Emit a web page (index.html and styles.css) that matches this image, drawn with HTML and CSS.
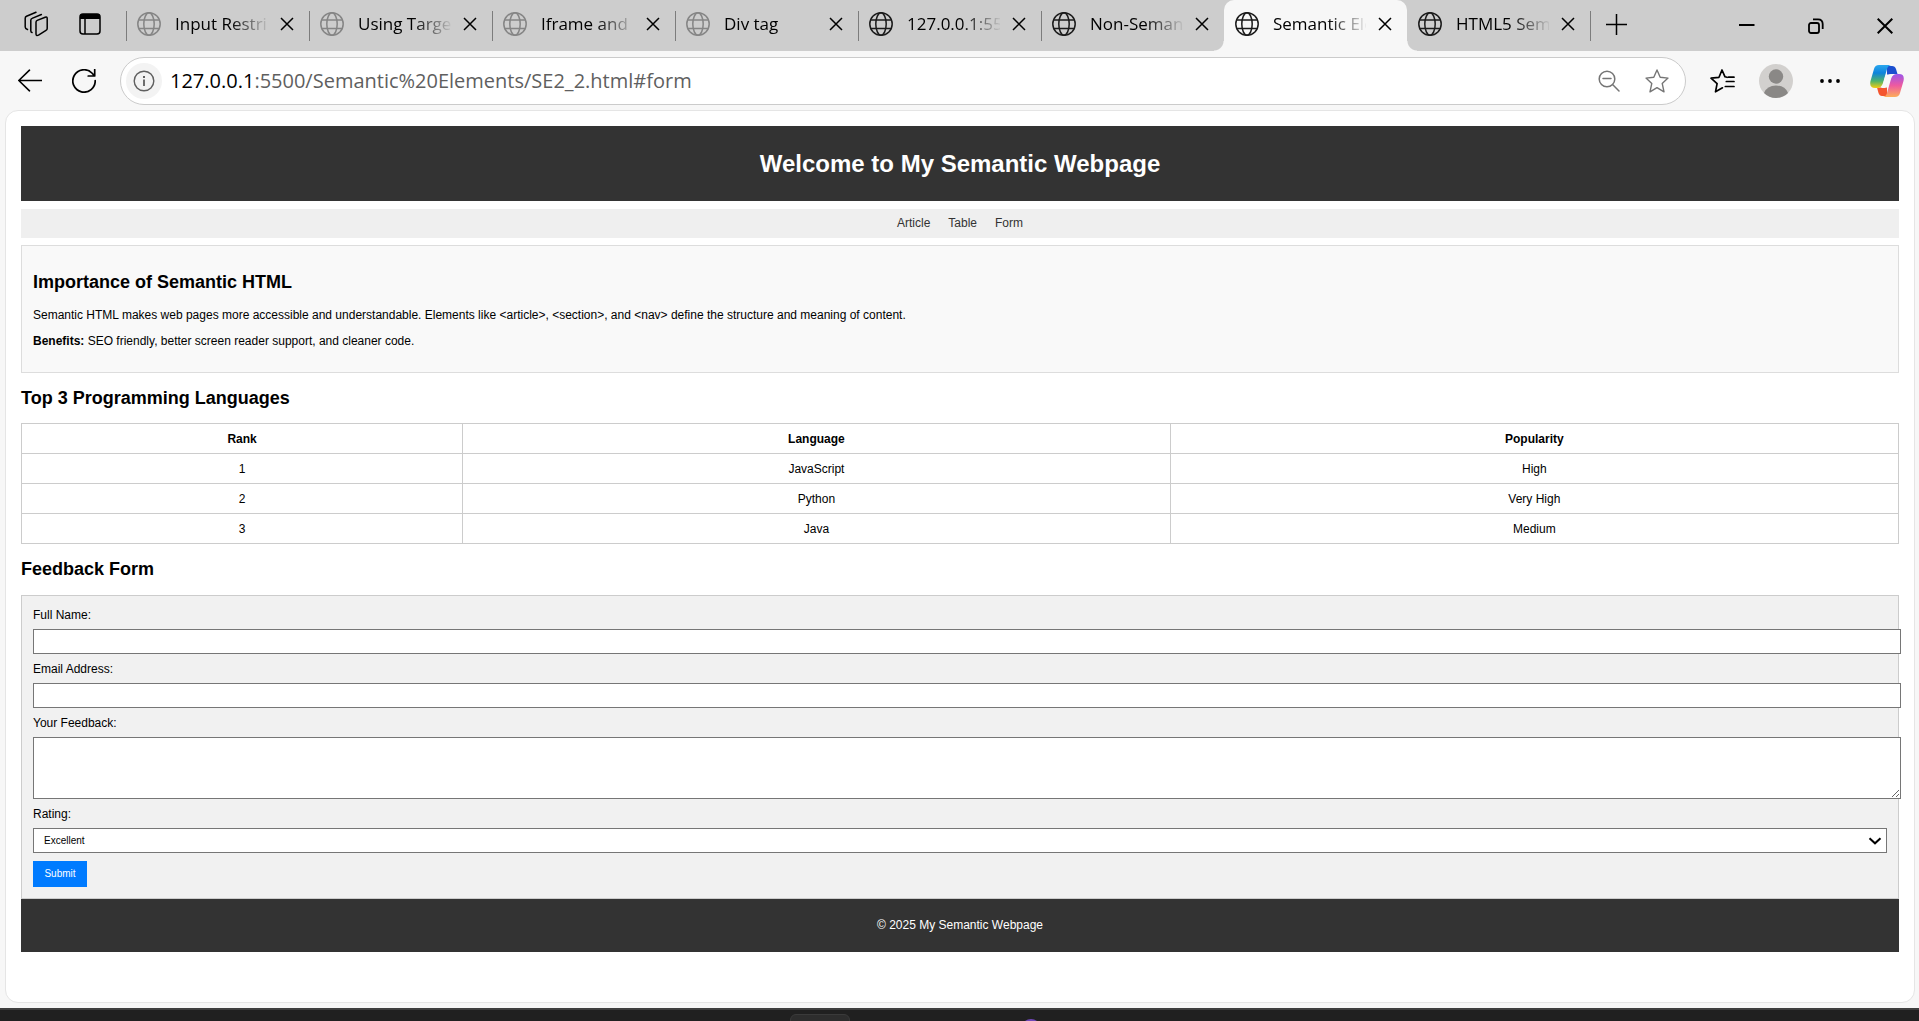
FILE: index.html
```html
<!DOCTYPE html>
<html lang="en">
<head>
<meta charset="utf-8">
<meta name="viewport" content="width=device-width, initial-scale=1">
<title>Semantic Elements</title>
<link rel="stylesheet" href="styles.css">
</head>
<body>
<svg class="sprite" width="0" height="0" aria-hidden="true">
  <symbol id="globe" viewBox="0 0 24 24"><g fill="none" stroke="currentColor" stroke-width="1.5"><circle cx="12" cy="12" r="11.2"/><ellipse cx="12" cy="12" rx="5.2" ry="11.2"/><path d="M1.6 8h20.8M1.6 16.5h20.8"/></g></symbol>
  <symbol id="cross" viewBox="0 0 14 14"><path d="M1 1l12 12M13 1L1 13" fill="none" stroke="currentColor" stroke-width="1.5"/></symbol>
</svg>

<div class="tabstrip">
  <button class="strip-btn" aria-label="Workspaces"><svg width="26" height="26" viewBox="0 0 26 26" fill="none" stroke="currentColor" stroke-width="1.5" stroke-linejoin="round" stroke-linecap="round"><path d="M13 11.2q0-1.3 1.2-1.8l8-3.2q2-.7 2 1.3v10q0 1.300-1.200 1.900l-7.500 4.700q-2.500 1.200-2.500-1.300z"/><path d="M9 21.500q-1.200-.3-1.200-1.800v-10.400q0-1.400 1.300-1.900l9.300-3.900"/><path d="M4.500 18.500q-2.300-.8-2.300-2.500v-8.800q0-1.300 1.300-1.900l9.500-4"/></svg></button>
  <button class="strip-btn" aria-label="Tab actions"><svg width="22" height="22" viewBox="0 0 22 22"><rect x="1" y="1" width="20" height="20" rx="3" fill="none" stroke="currentColor" stroke-width="1.500"/><path d="M1 6V3q0-2 2-2h16q2 0 2 2v3z" fill="currentColor"/><path d="M6 6v15" stroke="currentColor" stroke-width="1.500"/></svg></button>
  <div class="tabs">
    <div class="tab idle"><svg class="globe"><use href="#globe"/></svg><span class="tab-title">Input Restrictions</span><button class="tab-close" aria-label="Close tab"><svg><use href="#cross"/></svg></button></div>
    <div class="tab idle"><svg class="globe"><use href="#globe"/></svg><span class="tab-title">Using Target</span><button class="tab-close" aria-label="Close tab"><svg><use href="#cross"/></svg></button></div>
    <div class="tab idle"><svg class="globe"><use href="#globe"/></svg><span class="tab-title">Iframe and</span><button class="tab-close" aria-label="Close tab"><svg><use href="#cross"/></svg></button></div>
    <div class="tab idle"><svg class="globe"><use href="#globe"/></svg><span class="tab-title">Div tag</span><button class="tab-close" aria-label="Close tab"><svg><use href="#cross"/></svg></button></div>
    <div class="tab"><svg class="globe"><use href="#globe"/></svg><span class="tab-title">127.0.0.1:5500</span><button class="tab-close" aria-label="Close tab"><svg><use href="#cross"/></svg></button></div>
    <div class="tab"><svg class="globe"><use href="#globe"/></svg><span class="tab-title">Non-Semantic</span><button class="tab-close" aria-label="Close tab"><svg><use href="#cross"/></svg></button></div>
    <div class="tab active"><svg class="globe"><use href="#globe"/></svg><span class="tab-title">Semantic Elements</span><button class="tab-close" aria-label="Close tab"><svg><use href="#cross"/></svg></button></div>
    <div class="tab"><svg class="globe"><use href="#globe"/></svg><span class="tab-title">HTML5 Semantic</span><button class="tab-close" aria-label="Close tab"><svg><use href="#cross"/></svg></button></div>
  </div>
  <button class="new-tab" aria-label="New tab"><svg width="21" height="21" viewBox="0 0 21 21"><path d="M10.500 0v21M0 10.500h21" stroke="currentColor" stroke-width="1.500"/></svg></button>
  <div class="window-controls">
    <button aria-label="Minimize"><svg width="16" height="16" viewBox="0 0 16 16"><path d="M0 7h15.500" stroke="currentColor" stroke-width="2"/></svg></button>
    <button aria-label="Restore"><svg width="16" height="16" viewBox="0 0 16 16" fill="none" stroke="currentColor" stroke-width="1.800"><rect x="1" y="5" width="10" height="10" rx="2"/><path d="M5 1.300h5q4.700 0 4.700 4.700v5"/></svg></button>
    <button aria-label="Close"><svg width="16" height="16" viewBox="0 0 16 16"><path d="M.7.7l14.600 14.600M15.300.7L.7 15.300" stroke="currentColor" stroke-width="2"/></svg></button>
  </div>
</div>

<div class="toolbar">
  <button class="tool" aria-label="Back"><svg width="24" height="24" viewBox="0 0 24 24" fill="none" stroke="currentColor" stroke-width="1.600" stroke-linecap="round" stroke-linejoin="round"><path d="M23.500 11.500H.8M11.500 1.200L.8 11.500l10.700 10.300"/></svg></button>
  <button class="tool" aria-label="Refresh"><svg width="24" height="24" viewBox="0 0 24 24" fill="none" stroke="currentColor" stroke-width="1.700" stroke-linecap="round" stroke-linejoin="round"><path d="M23.200 11.500a11.200 11.200 0 1 1-3.300-7.500l2.600 2.800M22.700.6v6.400h-6.500"/></svg></button>
  <div class="address">
    <button class="site-info" aria-label="Site information"><svg width="22" height="22" viewBox="0 0 22 22" fill="none" stroke="currentColor" stroke-width="1.400"><circle cx="11" cy="11" r="9.800"/><path d="M11 9.500v6.500" stroke-width="1.800"/><path d="M11 6v2" stroke-width="2"/></svg></button>
    <span class="url"><span class="host">127.0.0.1</span>:5500/Semantic%20Elements/SE2_2.html#form</span>
    <button class="inner" aria-label="Zoom out"><svg width="22" height="22" viewBox="0 0 22 22" fill="none" stroke="currentColor" stroke-width="1.500" stroke-linecap="round"><circle cx="9" cy="9" r="7.800"/><path d="M5 8.500h8M14.800 14.800L21 21"/></svg></button>
    <button class="inner" aria-label="Add to favorites"><svg width="24" height="24" viewBox="0 0 24 24" fill="none" stroke="currentColor" stroke-width="1.400" stroke-linejoin="round"><path d="M12 1l3.200 7.200 7.800.9-5.800 5.300 1.800 8.400-7-4.200-7 4.200 1.800-8.400L1 9.100l7.800-.9z"/></svg></button>
  </div>
  <button class="tool" aria-label="Favorites"><svg width="25" height="24" viewBox="0 0 25 24" fill="none" stroke="currentColor" stroke-width="1.700" stroke-linejoin="round" stroke-linecap="round"><path d="M12.500 18.800L5.500 22.800l1.600-8.200L1 9.200l8-.9L12 1l3 6.800 2 .5M16.300 12.500H24M18.500 8.200H24M15.300 17.500H24"/></svg></button>
  <button class="tool" aria-label="Profile"><svg width="34" height="34" viewBox="0 0 34 34"><circle cx="17" cy="17" r="17" fill="#d2d0ce"/><circle cx="17" cy="12.500" r="7.200" fill="#8a8886"/><path d="M5 29q3-7.500 12-7.500T29 29q-5 5-12 5T5 29z" fill="#8a8886"/></svg></button>
  <button class="tool" aria-label="Settings and more"><svg width="20" height="4" viewBox="0 0 20 4"><g fill="currentColor"><circle cx="2" cy="2" r="1.900"/><circle cx="10" cy="2" r="1.900"/><circle cx="18" cy="2" r="1.900"/></g></svg></button>
  <button class="tool copilot" aria-label="Copilot"><svg width="34" height="32" viewBox="0 0 34 32">
    <defs>
      <linearGradient id="cool" x1="0" y1="0" x2="0" y2="1"><stop offset="0" stop-color="#2aa7ee"/><stop offset=".35" stop-color="#0d83dc"/><stop offset=".7" stop-color="#4fb36b"/><stop offset="1" stop-color="#f5cc10"/></linearGradient>
      <linearGradient id="warm" x1="0" y1="0" x2="0" y2="1"><stop offset="0" stop-color="#9b55ea"/><stop offset=".5" stop-color="#ee5aa0"/><stop offset="1" stop-color="#fdae5a"/></linearGradient>
    </defs>
    <path d="M17 1h5q3 0 4 3l1.500 5H21q-3 0-4 3z" fill="#1b4fcf"/>
    <path d="M17 31h-5q-2.500 0-3.500-3L7 22.500h6q3 0 4-3z" fill="#f4552f"/>
    <path d="M9 0h12q-3 .5-4 4l-4 14q-1.500 5-6 5H5q-6 0-4.500-7L4 4q1-4 5-4z" fill="url(#cool)"/>
    <path d="M25 32H13q3-.5 4-4l4-14q1.500-5 6-5h2q6 0 4.500 7L30 28q-1 4-5 4z" fill="url(#warm)"/>
    <path d="M16 9.500h7.500q-2 1-3 4l-2 7q-1 2.500-4 2.500h-3.500q1.500-1.500 2-4l2-7q.5-1.500 1-2.500z" fill="#f7f7f7"/>
  </svg></button>
</div>

<div class="viewport">
  <div class="page">
    <header class="banner"><h1>Welcome to My Semantic Webpage</h1></header>
    <nav class="links"><a href="#article">Article</a><a href="#table">Table</a><a href="#form">Form</a></nav>
    <main>
      <article class="article" id="article">
        <h2>Importance of Semantic HTML</h2>
        <p>Semantic HTML makes web pages more accessible and understandable. Elements like &lt;article&gt;, &lt;section&gt;, and &lt;nav&gt; define the structure and meaning of content.</p>
        <p><strong>Benefits:</strong> SEO friendly, better screen reader support, and cleaner code.</p>
      </article>
      <section class="languages" id="table">
        <h2 class="heading">Top 3 Programming Languages</h2>
        <table class="ranking">
          <colgroup><col class="col-rank"><col class="col-language"><col class="col-popularity"></colgroup>
          <thead><tr><th scope="col">Rank</th><th scope="col">Language</th><th scope="col">Popularity</th></tr></thead>
          <tbody>
            <tr><td>1</td><td>JavaScript</td><td>High</td></tr>
            <tr><td>2</td><td>Python</td><td>Very High</td></tr>
            <tr><td>3</td><td>Java</td><td>Medium</td></tr>
          </tbody>
        </table>
      </section>
      <section>
        <h2 class="heading">Feedback Form</h2>
        <form class="feedback" id="form">
          <label for="name">Full Name:</label>
          <input id="name" type="text">
          <label for="email">Email Address:</label>
          <input id="email" type="email">
          <label for="message">Your Feedback:</label>
          <textarea id="message"></textarea>
          <label for="rating">Rating:</label>
          <div class="select">
            <select id="rating"><option>Excellent</option><option>Good</option><option>Average</option></select>
            <svg class="chevron" width="14" height="8" viewBox="0 0 14 8"><path d="M1.500 1.300L7 6.300l5.500-5" fill="none" stroke="#000" stroke-width="2"/></svg>
          </div>
          <button class="submit" type="submit">Submit</button>
        </form>
      </section>
    </main>
    <footer class="footer"><p>© 2025 My Semantic Webpage</p></footer>
  </div>
</div>

<div class="taskbar"><span class="task"></span><span class="task-dot"></span></div>
</body>
</html>
```
FILE: styles.css
```css
* { box-sizing: border-box; }

body {
  margin: 0;
  height: 100vh;
  display: flex;
  flex-direction: column;
  background: #f7f7f7;
  color: #000;
  font: 12px/15px "Liberation Sans", Arial, sans-serif;
  overflow: hidden;
}

button {
  margin: 0;
  padding: 0;
  border: 0;
  background: none;
  color: inherit;
  font: inherit;
}

.sprite { position: absolute; }

/* Tab strip */
.tabstrip {
  display: flex;
  flex: none;
  height: 51px;
  padding-left: 9px;
  background: #cdcdcd;
}

.strip-btn,
.new-tab,
.window-controls button,
.tool,
.inner,
.site-info {
  display: flex;
  flex: none;
  align-items: center;
  justify-content: center;
}

.strip-btn { width: 54px; height: 48px; }

.tabs {
  display: flex;
  flex: 0 1 1464px;
  min-width: 0;
  margin-left: 9px;
}

.tab {
  position: relative;
  display: flex;
  flex: 1 1 0;
  min-width: 0;
  align-items: center;
  padding: 0 15px 3px 11px;
  font: 17px/24px "Open Sans", "Noto Sans", sans-serif;
}

.tab::before,
.new-tab::before {
  content: "";
  position: absolute;
  left: 0;
  top: 11px;
  width: 1px;
  height: 30px;
  background: #7c7c7c;
}

.tab.active {
  border-radius: 10px 10px 0 0;
  background: #f7f7f7;
}

/* Flared feet that join the active tab to the toolbar */
.tab.active::before,
.tab.active::after {
  content: "";
  position: absolute;
  top: auto;
  bottom: 0;
  width: 10px;
  height: 10px;
}
.tab.active::before {
  left: -10px;
  background: radial-gradient(circle at 0 0, transparent 9px, #f7f7f7 10px);
}
.tab.active::after {
  right: -10px;
  background: radial-gradient(circle at 100% 0, transparent 9px, #f7f7f7 10px);
}
.tab.active + .tab::before { content: none; }

.globe {
  flex: none;
  width: 24px;
  height: 24px;
  color: #1b1b1b;
}
.idle .globe { color: #858585; }

.tab-title {
  flex: 1;
  min-width: 0;
  margin: 0 12px 0 14px;
  overflow: hidden;
  white-space: nowrap;
  -webkit-mask-image: linear-gradient(to right, #000 55px, transparent 95px);
  mask-image: linear-gradient(to right, #000 55px, transparent 95px);
}

.tab-close { display: flex; flex: none; }
.tab-close svg { width: 14px; height: 14px; }

.new-tab {
  position: relative;
  width: 52px;
  height: 48px;
}

.window-controls { display: flex; margin-left: auto; }
.window-controls button { width: 69px; }

/* Toolbar */
.toolbar {
  display: flex;
  flex: none;
  align-items: center;
  gap: 6px;
  height: 59px;
  padding: 1px 8px 0 6px;
}

.tool { width: 48px; height: 48px; }
.tool.copilot { margin-left: 3px; }

.address {
  display: flex;
  flex: 1;
  min-width: 0;
  align-items: center;
  height: 48px;
  margin: 0 6px;
  padding: 0 4px 0 5px;
  border: 1px solid #cbcbcb;
  border-radius: 24px;
  background: #fff;
}

.site-info {
  width: 36px;
  height: 36px;
  margin-right: 8px;
  border-radius: 50%;
  background: #f3f3f3;
  color: #5f5f5f;
}

.url {
  flex: 1;
  min-width: 0;
  overflow: hidden;
  white-space: nowrap;
  color: #5f5f5f;
  font: 20px/28px "Open Sans", "Noto Sans", sans-serif;
}
.host { color: #000; }

.inner { width: 48px; color: #757575; }

/* Page area */
.viewport {
  flex: 1;
  min-height: 0;
  margin: 0 4px 5px 5px;
  padding: 15px;
  border: 1px solid #e5e5e5;
  border-radius: 13px;
  background: #fff;
}

h1,
h2,
p { margin: 0; }

h2 { font-size: 18px; line-height: 21px; }

.banner {
  padding: 24px 8px;
  background: #333;
  color: #fff;
  text-align: center;
}
h1 { font-size: 24px; line-height: 27px; }

.links {
  display: flex;
  justify-content: center;
  gap: 18px;
  margin: 8px 0 7px;
  padding: 7px;
  background: #efefef;
}
.links a { color: #333; text-decoration: none; }

.article {
  padding: 26px 11px 23px;
  border: 1px solid #ddd;
  background: #f9f9f9;
}
.article h2 { margin-bottom: 15px; }
.article p + p { margin-top: 11px; }

.heading { margin: 15px 0; }
.languages .heading { margin-bottom: 14px; }

.ranking {
  width: 100%;
  border-collapse: collapse;
  table-layout: fixed;
  text-align: center;
}
.ranking th,
.ranking td {
  padding: 8px 7px 6px;
  border: 1px solid #ccc;
}
.col-rank { width: 23.5%; }
.col-language { width: 37.7%; }
.col-popularity { width: 38.8%; }

/* Form: text fields keep content-box sizing, so they run past the padding */
.feedback {
  display: flex;
  flex-direction: column;
  align-items: flex-start;
  gap: 7px;
  padding: 11px;
  border: 1px solid #ccc;
  background: #f1f1f1;
}

.feedback label {
  margin-top: 1px;
  line-height: 14px;
}

.feedback input,
.feedback textarea {
  box-sizing: content-box;
  width: 100%;
  margin: 0;
  padding: 6px;
  border: 1px solid #767676;
  border-radius: 0;
  background: #fff;
  font: 10px/11px "Liberation Sans", Arial, sans-serif;
}
.feedback input { height: 11px; }
.feedback textarea { height: 48px; }

.select { position: relative; width: 100%; }
.select select {
  display: block;
  appearance: none;
  width: 100%;
  height: 25px;
  margin: 0;
  padding: 0 10px;
  border: 1px solid #767676;
  border-radius: 0;
  background: #fff;
  color: #000;
  font: 10px/11px "Liberation Sans", Arial, sans-serif;
}
.chevron {
  position: absolute;
  right: 5px;
  top: 9px;
  pointer-events: none;
}

.submit {
  min-width: 54px;
  margin-top: 1px;
  padding: 7px 11px;
  background: #007bff;
  color: #fff;
  font-size: 10px;
  line-height: 12px;
}

.footer {
  padding: 19px 8px;
  background: #333;
  color: #fff;
  text-align: center;
}

/* Top edge of the desktop taskbar */
.taskbar {
  display: flex;
  flex: none;
  align-items: flex-start;
  justify-content: center;
  gap: 171px;
  height: 13px;
  padding: 4px 89px 0 0;
  border-top: 2px solid #3f3f3f;
  background: #202020;
  overflow: hidden;
}
.task {
  width: 60px;
  height: 40px;
  border: 1px solid #3a3a3a;
  border-radius: 6px;
  background: #2d2d2d;
}
.task-dot {
  width: 20px;
  height: 20px;
  margin-top: 5px;
  border-radius: 50%;
  background: #7048b8;
}
```
